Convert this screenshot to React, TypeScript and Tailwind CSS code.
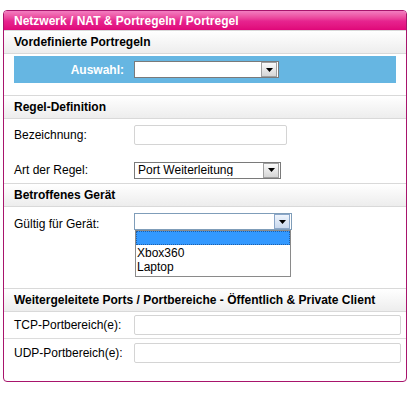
import React from "react";

const font = { fontFamily: '"Liberation Sans", Arial, sans-serif' };

const Arrow = ({ focused = false }: { focused?: boolean }) => (
  <span
    className={`flex h-[15px] w-[16px] shrink-0 items-center justify-center border ${
      focused
        ? "border-[#8aa6c8] bg-gradient-to-b from-[#eef4fc] to-[#c9d9ee]"
        : "border-[#a0a0a0] bg-gradient-to-b from-[#fafafa] to-[#d6d6d6]"
    }`}
  >
    <svg width="7" height="4" viewBox="0 0 7 4">
      <path d="M0 0h7L3.5 4z" fill="#000" />
    </svg>
  </span>
);

const Select = ({
  value = "",
  width,
  focused = false,
}: {
  value?: string;
  width: string;
  focused?: boolean;
}) => (
  <div
    className={`flex h-[17px] items-center border bg-white pl-[3px] pr-px ${width} ${
      focused ? "border-[#7f9db9]" : "border-[#7a7a7a]"
    }`}
  >
    <span className="flex-1 truncate text-[12px] leading-none text-black">{value}</span>
    <Arrow focused={focused} />
  </div>
);

const SectionHeader = ({ title }: { title: string }) => (
  <div className="flex h-[24px] items-center border-y border-[#d9d9d9] bg-gradient-to-b from-white to-[#ededed] pl-[10px] text-[12px] font-bold text-black">
    {title}
  </div>
);

const TextInput = ({ width }: { width: string }) => (
  <div className={`h-[20px] rounded-[2px] border border-[#d4d4d4] bg-white ${width}`} />
);

export default function App() {
  return (
    <div className="min-h-[406px] w-[416px] bg-white pt-[10px] pl-[3px]" style={font}>
      <div className="flex h-[372px] w-[404px] flex-col overflow-hidden rounded-[4px] border border-[#a8146c] bg-white">
        <div className="flex h-[20px] items-center bg-gradient-to-b from-[#f27dc0] via-[#e7238f] to-[#df0077] pl-[10px] text-[12px] font-bold text-white">
          Netzwerk / NAT &amp; Portregeln / Portregel
        </div>

        <div className="-mt-px">
          <SectionHeader title="Vordefinierte Portregeln" />
        </div>
        <div className="mx-[10px] mt-[2px] flex h-[27px] items-center bg-[#66b6e2]">
          <span className="w-[120px] pr-[10px] text-right text-[12px] font-bold text-white">
            Auswahl:
          </span>
          <Select width="w-[145px]" />
        </div>

        <div className="mt-[12px]">
          <SectionHeader title="Regel-Definition" />
        </div>
        <div className="flex items-center pt-[6px] pl-[10px]">
          <span className="w-[120px] text-[12px] text-black">Bezeichnung:</span>
          <TextInput width="w-[153px]" />
        </div>
        <div className="mt-[16px] flex items-center pl-[10px]">
          <span className="w-[120px] text-[12px] text-black">Art der Regel:</span>
          <Select value="Port Weiterleitung" width="w-[147px]" />
        </div>

        <div className="mt-[4px]">
          <SectionHeader title="Betroffenes Gerät" />
        </div>
        <div className="flex items-start pt-[6px] pl-[10px]">
          <span className="mt-[2px] w-[120px] text-[12px] text-black">Gültig für Gerät:</span>
          <div className="relative">
            <Select width="w-[158px]" focused />
            <div className="absolute top-[17px] left-px w-[156px] border border-[#8a8a8a] bg-white text-[12px] leading-[14px] text-black">
              <div className="h-[14px] border border-dotted border-[#1f5fa8] bg-[#3399ff]" />
              <div className="pl-px pt-px">Xbox360</div>
              <div className="pl-px pb-[2px]">Laptop</div>
            </div>
          </div>
        </div>

        <div className="mt-[55px]">
          <SectionHeader title="Weitergeleitete Ports / Portbereiche - Öffentlich & Private Client" />
        </div>
        <div className="flex h-[27px] items-center border-b border-[#dcdcdc] pl-[10px]">
          <span className="w-[120px] text-[12px] text-black">TCP-Portbereich(e):</span>
          <TextInput width="w-[267px]" />
        </div>
        <div className="flex h-[27px] items-center pl-[10px]">
          <span className="w-[120px] text-[12px] text-black">UDP-Portbereich(e):</span>
          <TextInput width="w-[267px]" />
        </div>
      </div>
    </div>
  );
}
